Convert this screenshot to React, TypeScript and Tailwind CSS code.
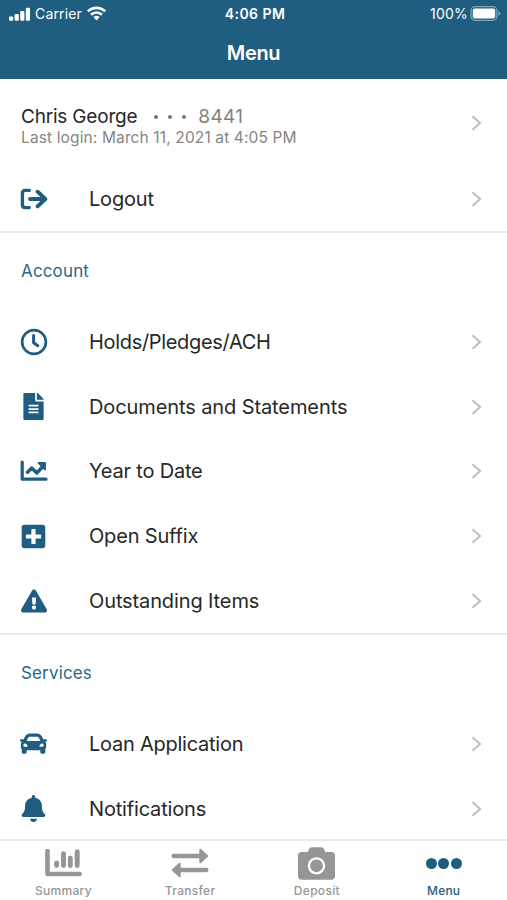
import type { ReactNode } from "react";
import { FaBell, FaCamera, FaCar, FaExclamationTriangle, FaFileAlt, FaPlusSquare } from "react-icons/fa";

function Chevron() {
  return (
    <svg className="h-4 w-[11px] shrink-0" viewBox="0 0 11 16" fill="none" stroke="#bebebe" strokeWidth="2">
      <path d="M1.5 1.2 9 8l-7.5 6.8" />
    </svg>
  );
}

function Row({ icon, label, tracking }: { icon: ReactNode; label: string; tracking: string }) {
  return (
    <div className="flex h-[64.700px] items-center pr-[25px] pl-[20px]">
      <div className="flex w-[69px] shrink-0 text-[#1f5e80]">
        <div className="flex w-[27px] justify-center">{icon}</div>
      </div>
      <span className={`flex-1 whitespace-nowrap text-[20px] leading-6 ${tracking}`}>{label}</span>
      <Chevron />
    </div>
  );
}

function SectionTitle({ children }: { children: ReactNode }) {
  return <h2 className="h-[76.600px] pt-[25.500px] pl-[21px] text-[17px] leading-6 tracking-[0.15px] text-[#2a6689]">{children}</h2>;
}

function LogoutIcon() {
  return (
    <svg className="h-[22px] w-7 shrink-0" viewBox="0 0 28 22" fill="none" stroke="currentColor" strokeLinecap="round" strokeLinejoin="round">
      <path d="M9.300 2.400H5.200Q2.400 2.400 2.400 5.200v11.600q0 2.800 2.800 2.800h4.100" strokeWidth="3.400" />
      <path d="M10 11H25M17.600 3.700l7.700 7.300-7.700 7.300" strokeWidth="3.900" />
    </svg>
  );
}

function ClockIcon() {
  return (
    <svg className="size-7 shrink-0" viewBox="0 0 28 28" fill="none" stroke="currentColor">
      <circle cx="14" cy="14" r="11.900" strokeWidth="2.700" />
      <path d="M13.600 7.500v7.200l4.200 3" strokeWidth="3" strokeLinecap="round" strokeLinejoin="round" />
    </svg>
  );
}

function TrendIcon() {
  return (
    <svg className="h-[22px] w-7 shrink-0" viewBox="0 0 28 22" fill="none" stroke="currentColor" strokeLinejoin="round">
      <path d="M2.200 2v17.200H26" strokeWidth="3.200" strokeLinecap="round" />
      <path d="m7.500 12.300 4.300-4.300 5 5 6-6.500" strokeWidth="3.400" strokeLinecap="round" />
      <path d="M18.300 2.800h6.800v7z" fill="currentColor" strokeWidth="1.600" />
    </svg>
  );
}

function BarsIcon() {
  return (
    <svg className="h-7 w-[37px]" viewBox="0 0 37 28" fill="none" stroke="currentColor">
      <path d="M2.500 2v23h32.200" strokeWidth="4.600" strokeLinecap="round" strokeLinejoin="round" />
      <path d="M11.600 14v2.500M18.500 4.800v11.700M25.300 9.300v7.200M32.200 2.800v13.700" strokeWidth="4.900" strokeLinecap="round" />
    </svg>
  );
}

function TransferIcon() {
  return (
    <svg className="h-[30px] w-[38px]" viewBox="0 0 38 30" fill="none" stroke="currentColor" strokeLinecap="round" strokeLinejoin="round">
      <path d="M2.600 8H30M8 22h27.400" strokeWidth="4.300" />
      <path d="M29.300 1.700 36.200 8l-6.900 6.300zM8.700 15.700 1.800 22l6.900 6.300z" fill="currentColor" strokeWidth="2" />
    </svg>
  );
}

function StatusBar() {
  return (
    <div className="flex h-7 items-center justify-between pr-[6px] pl-[9px]">
      <div className="flex flex-1 items-center">
        <svg className="mb-px h-[14px] w-[21px]" viewBox="0 0 21 14" fill="currentColor">
          <rect x="0" y="9.500" width="4.200" height="4.200" rx="1" />
          <rect x="5.600" y="7" width="4.200" height="6.700" rx="1" />
          <rect x="11.200" y="4" width="4.200" height="9.700" rx="1" />
          <rect x="16.800" y="0.800" width="4.200" height="12.900" rx="1" />
        </svg>
        <span className="mb-px ml-[5px] text-[14px] tracking-[0.15px]">Carrier</span>
        <svg className="mb-[2px] ml-[5px] h-[15px] w-[19px]" viewBox="0 0 19 15" fill="none" stroke="currentColor" strokeWidth="2.700">
          <path d="M.9 5.300a12.300 12.300 0 0 1 17.200 0M4 8.700a8 8 0 0 1 11 0" />
          <path d="m9.500 14.400-3.100-3.300a4.600 4.600 0 0 1 6.200 0z" fill="currentColor" stroke="none" />
        </svg>
      </div>
      <span className="mb-px text-[14px] font-semibold tracking-[0.45px]">4:06 PM</span>
      <div className="flex flex-1 items-center justify-end">
        <span className="mr-[2px] mb-px text-[14px] tracking-[0.2px]">100%</span>
        <svg className="mb-[2px] h-[15px] w-[31px]" viewBox="0 0 31 15">
          <rect x="1" y="0.700" width="26" height="13.600" rx="4" fill="none" stroke="#7fa3b8" strokeWidth="1.300" />
          <rect x="2.800" y="2.600" width="22.400" height="9.800" rx="2" fill="white" />
          <path d="M28.500 5q2 1 2 2.500t-2 2.500z" fill="#7fa3b8" />
        </svg>
      </div>
    </div>
  );
}

function Tab({ icon, label, style }: { icon: ReactNode; label: string; style: string }) {
  return (
    <div className={`flex flex-1 flex-col items-center ${style}`}>
      <div className="flex h-[42px] items-center justify-center pt-[2px]">{icon}</div>
      <span className="text-[12px] leading-[15px] font-medium">{label}</span>
    </div>
  );
}

export default function App() {
  return (
    <div className="flex h-[900px] w-[507px] flex-col overflow-hidden bg-white font-['Inter','Liberation_Sans',sans-serif] text-[#272727]">
      <header className="h-[79px] shrink-0 bg-[#1f5e80] text-white">
        <StatusBar />
        <h1 className="pt-[11px] text-center text-[20px] leading-7 font-semibold tracking-[-0.35px]">Menu</h1>
      </header>
      <main className="h-[760px] shrink-0 overflow-hidden">
        <div className="flex h-[88px] items-center pr-[25px] pl-[21px]">
          <div className="flex-1 pt-[6px]">
            <div className="flex items-center text-[19px] leading-[23px]">
              <span className="tracking-[-0.2px]">Chris George</span>
              <span className="mt-[2px] ml-[17px] flex gap-[10px]">
                <i className="size-1 rounded-full bg-[#777]" />
                <i className="size-1 rounded-full bg-[#777]" />
                <i className="size-1 rounded-full bg-[#777]" />
              </span>
              <span className="ml-[12px] tracking-[0.3px] text-[#828282]">8441</span>
            </div>
            <p className="text-[15.500px] leading-[20px] tracking-[0.130px] text-[#858585]">Last login: March 11, 2021 at 4:05 PM</p>
          </div>
          <Chevron />
        </div>
        <div className="h-[66px] border-b-2 border-[#ebebeb]">
          <Row icon={<LogoutIcon />} label="Logout" tracking="tracking-[-0.2px]" />
        </div>
        <section className="border-b-2 border-[#ebebeb]">
          <SectionTitle>Account</SectionTitle>
          <Row icon={<ClockIcon />} label="Holds/Pledges/ACH" tracking="tracking-[-0.320px]" />
          <Row icon={<FaFileAlt className="size-[27px]" />} label="Documents and Statements" tracking="tracking-[-0.100px]" />
          <Row icon={<TrendIcon />} label="Year to Date" tracking="tracking-[-0.2px]" />
          <Row icon={<FaPlusSquare className="size-[27px]" />} label="Open Suffix" tracking="tracking-[-0.170px]" />
          <Row icon={<FaExclamationTriangle className="size-[26px]" />} label="Outstanding Items" tracking="tracking-[-0.120px]" />
        </section>
        <section>
          <SectionTitle>Services</SectionTitle>
          <Row icon={<FaCar className="size-[27px]" />} label="Loan Application" tracking="tracking-[-0.250px]" />
          <Row icon={<FaBell className="size-[27px]" />} label="Notifications" tracking="tracking-[-0.170px]" />
        </section>
      </main>
      <nav className="flex h-[61px] shrink-0 border-t-2 border-[#ebebeb]">
        <Tab icon={<BarsIcon />} label="Summary" style="text-[#969696] tracking-[0.3px]" />
        <Tab icon={<TransferIcon />} label="Transfer" style="text-[#969696] tracking-[0.3px]" />
        <Tab icon={<FaCamera className="size-[37px]" />} label="Deposit" style="text-[#969696] tracking-[0.3px]" />
        <Tab
          icon={
            <span className="flex gap-[1.500px]">
              <i className="size-[11px] rounded-full bg-current" />
              <i className="size-[11px] rounded-full bg-current" />
              <i className="size-[11px] rounded-full bg-current" />
            </span>
          }
          label="Menu"
          style="text-[#1f5e80] tracking-[0.2px]"
        />
      </nav>
    </div>
  );
}
